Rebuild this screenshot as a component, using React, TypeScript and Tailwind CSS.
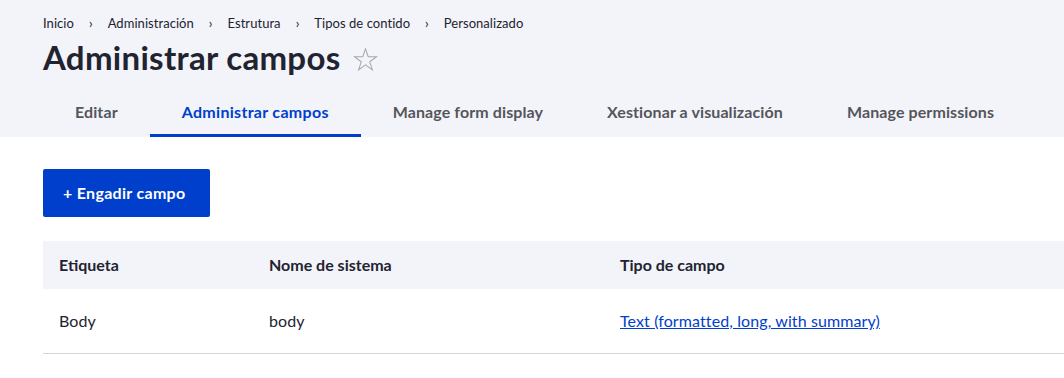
import React from "react";

const crumbs = ["Inicio", "Administración", "Estrutura", "Tipos de contido", "Personalizado"];

const tabs = [
  { label: "Editar", active: false },
  { label: "Administrar campos", active: true },
  { label: "Manage form display", active: false },
  { label: "Xestionar a visualización", active: false },
  { label: "Manage permissions", active: false },
];

const StarIcon = () => (
  <svg width="25" height="25" viewBox="0 0 24 24" className="ml-[13px] mt-1">
    <path
      d="M12 1.8l2.6 7.6h8l-6.5 4.8 2.5 7.7L12 17.2l-6.6 4.7 2.5-7.7L1.4 9.4h8z"
      fill="none"
      stroke="#a6a6ad"
      strokeWidth="1"
      strokeLinejoin="miter"
    />
  </svg>
);

export default function App() {
  return (
    <div className="w-[1064px] h-[378px] overflow-hidden bg-white text-[#222330]" style={{ fontFamily: "Lato, 'Noto Sans', sans-serif" }}>
      <div className="bg-[#f3f4f9] px-[43px] pt-[15px]">
        <nav className="flex items-center text-[13px] leading-4 tracking-[0.05px] whitespace-nowrap">
          {crumbs.map((c, i) => (
            <span key={c} className="flex items-center">
              {i > 0 && <span className="mx-[15px] text-[13px]">›</span>}
              <span>{c}</span>
            </span>
          ))}
        </nav>
        <div className="flex items-center mt-[6px] h-[40px]">
          <h1 className="text-[33px] font-bold leading-10 tracking-[0.3px] whitespace-nowrap">Administrar campos</h1>
          <StarIcon />
        </div>
        <div className="flex mt-[12px] w-[1100px]">
          {tabs.map((t) => (
            <div
              key={t.label}
              className={
                "shrink-0 whitespace-nowrap px-8 h-[48px] flex items-center text-[16px] font-bold border-b-[3px] " +
                (t.active
                  ? "text-[#003ecc] border-[#003ecc] tracking-[0.3px]"
                  : "text-[#55565b] border-transparent tracking-[0.1px]")
              }
            >
              {t.label}
            </div>
          ))}
        </div>
      </div>

      <div className="px-[43px] pt-[32px]">
        <button className="w-[167px] h-[48px] pl-5 text-left bg-[#003ecc] text-white text-[16px] font-bold tracking-[0.3px] rounded-[2px] whitespace-nowrap">
          + Engadir campo
        </button>

        <div className="mt-[24px] w-[1100px]">
          <div className="grid grid-cols-[210px_351px_1fr] h-[48px] items-center bg-[#f3f4f9] text-[16px] font-bold">
            <div className="px-4">Etiqueta</div>
            <div className="px-4">Nome de sistema</div>
            <div className="px-4">Tipo de campo</div>
          </div>
          <div className="grid grid-cols-[210px_351px_1fr] h-[65px] items-center border-b border-[#d3d4d9] text-[16px] tracking-[0.1px]">
            <div className="px-4">Body</div>
            <div className="px-4">body</div>
            <div className="px-4">
              <a href="#" className="text-[#003ecc] underline">Text (formatted, long, with summary)</a>
            </div>
          </div>
        </div>
      </div>
    </div>
  );
}
